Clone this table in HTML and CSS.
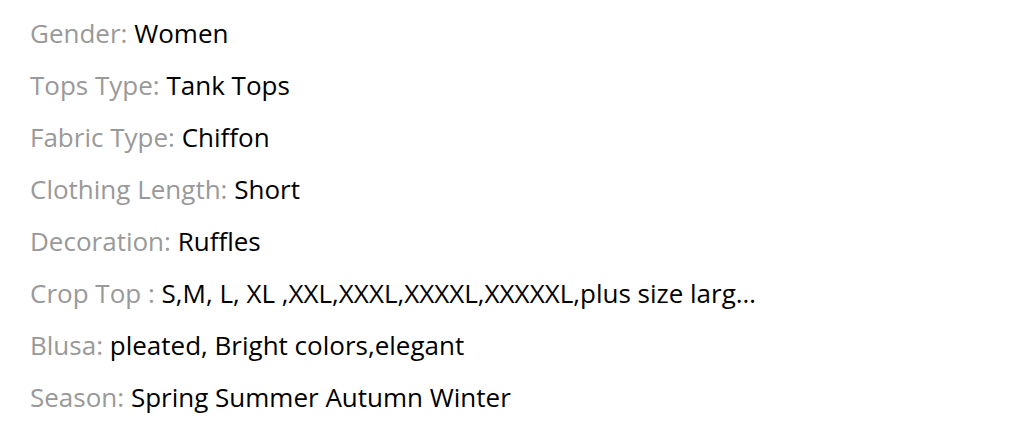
FILE: index.html
```html
<!DOCTYPE html>
<html lang="en">
<head>
    <meta charset="UTF-8">
    <meta name="viewport" content="width=device-width, initial-scale=1.0">
    <title>Item Specifics</title>
    <link rel="stylesheet" href="styles.css">
</head>
<body>
    <ul class="specs">
        <li class="spec"><span class="spec-name">Gender:</span> <span class="spec-value">Women</span></li>
        <li class="spec"><span class="spec-name">Tops Type:</span> <span class="spec-value">Tank Tops</span></li>
        <li class="spec"><span class="spec-name">Fabric Type:</span> <span class="spec-value">Chiffon</span></li>
        <li class="spec"><span class="spec-name">Clothing Length:</span> <span class="spec-value">Short</span></li>
        <li class="spec"><span class="spec-name">Decoration:</span> <span class="spec-value">Ruffles</span></li>
        <li class="spec"><span class="spec-name">Crop Top :</span> <span class="spec-value">S,M, L, XL ,XXL,XXXL,XXXXL,XXXXXL,plus size large size</span></li>
        <li class="spec"><span class="spec-name">Blusa:</span> <span class="spec-value">pleated, Bright colors,elegant</span></li>
        <li class="spec"><span class="spec-name">Season:</span> <span class="spec-value">Spring Summer Autumn Winter</span></li>
    </ul>
</body>
</html>
```

FILE: styles.css
```css
body {
    margin: 0;
    background: #fff;
    font-family: "Open Sans", Arial, sans-serif;
}
.specs {
    list-style: none;
    margin: 0;
    padding: 7px 30px;
}
.spec {
    max-width: 737px;
    font-size: 26px;
    line-height: 52px;
    white-space: nowrap;
    overflow: hidden;
    text-overflow: ellipsis;
}
.spec-name {
    color: #999;
}
.spec-value {
    color: #000;
}
```
